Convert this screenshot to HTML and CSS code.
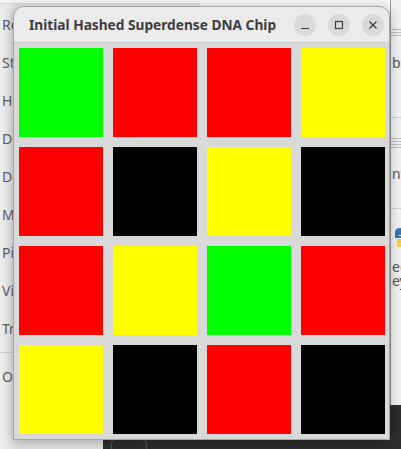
FILE: index.html
```html
<html>
    <head>
        <title>Initial Hashed Superdense DNA Chip</title>
        <link rel="stylesheet" href="styles.css">
    </head>
    <body>
        <div class="desk">
            <div class="backapp">
                <div class="topbar"></div>
                <ul class="menu">
                    <li>Recent</li>
                    <li>Starred</li>
                    <li>Home</li>
                    <li>Desktop</li>
                    <li>Documents</li>
                    <li>Music</li>
                    <li>Pictures</li>
                    <li>Videos</li>
                    <li>Trash</li>
                    <li class="sep">Other Locations</li>
                </ul>
            </div>
            <div class="sidepane">
                <div class="lines top"></div>
                <div class="row first">blob</div>
                <div class="lines"></div>
                <div class="row second">nvim</div>
                <div class="pyicon">
                    <svg width="14" height="22" viewBox="0 0 14 22">
                        <path d="M2 11 V5 C2 3 4 1 7 1 C10 1 11 3 11 5 V8 H6 V9 H11 V11 Z" fill="#3a75b0"/>
                        <path d="M4 12 H14 V20 H4 Z" fill="#f5d33d"/>
                    </svg>
                </div>
                <div class="row tight">eco</div>
                <div class="row tight">eye</div>
            </div>
            <div class="term">
                <div class="termbtn"></div>
            </div>

            <div class="window">
                <div class="titlebar">
                    <span class="title">Initial Hashed Superdense DNA Chip</span>
                    <div class="controls">
                        <div class="ctl">
                            <svg width="10" height="10" viewBox="0 0 10 10"><path d="M1 8.5 H9" stroke="#3d3d3d" stroke-width="1.2"/></svg>
                        </div>
                        <div class="ctl">
                            <svg width="10" height="10" viewBox="0 0 10 10"><rect x="1.5" y="1.5" width="7" height="7" fill="none" stroke="#3d3d3d" stroke-width="1.2"/></svg>
                        </div>
                        <div class="ctl">
                            <svg width="10" height="10" viewBox="0 0 10 10"><path d="M1.5 1.5 L8.5 8.5 M8.5 1.5 L1.5 8.5" stroke="#3d3d3d" stroke-width="1.3"/></svg>
                        </div>
                    </div>
                </div>
                <div class="chip">
                    <div class="cell green"></div>
                    <div class="cell red"></div>
                    <div class="cell red"></div>
                    <div class="cell yellow"></div>

                    <div class="cell red"></div>
                    <div class="cell black"></div>
                    <div class="cell yellow"></div>
                    <div class="cell black"></div>

                    <div class="cell red"></div>
                    <div class="cell yellow"></div>
                    <div class="cell green"></div>
                    <div class="cell red"></div>

                    <div class="cell yellow"></div>
                    <div class="cell black"></div>
                    <div class="cell red"></div>
                    <div class="cell black"></div>
                </div>
            </div>
        </div>
    </body>
</html>
```

FILE: styles.css
```css
body{
	margin:0;
	font-family:'Noto Sans', sans-serif;
	background:#f6f6f6;
	}
.desk{
	position:relative;
	width:401px;
	height:449px;
	overflow:hidden;
	}
.backapp{
	position:absolute;
	left:0;
	top:0;
	width:200px;
	height:449px;
	background:linear-gradient(90deg, #ededed 0, #ededed 4px, #e2e2e2 14px);
	}
.topbar{
	height:3px;
	border-bottom:1px solid #d6d6d6;
	background:#f4f4f4;
	}
.menu{
	list-style:none;
	margin:0;
	padding:6px 0 0 0;
	font-size:14px;
	color:#5e5e5e;
	}
.menu li{
	height:38px;
	line-height:30px;
	padding-left:2px;
	white-space:nowrap;
	}
.menu li.sep{
	border-top:1px solid #cfcfcf;
	padding-top:9px;
	}
.sidepane{
	position:absolute;
	left:390px;
	top:0;
	width:11px;
	height:405px;
	background:#f1f1f1;
	border-left:1px solid #9a9a9a;
	font-size:14px;
	color:#555;
	overflow:hidden;
	}
.lines{
	height:13px;
	margin-top:18px;
	background:repeating-linear-gradient(#f1f1f1 0, #f1f1f1 2px, #bdbdbd 2px, #bdbdbd 3px);
	}
.lines.top{
	margin-top:27px;
	height:11px;
	}
.row{
	padding-left:1px;
	line-height:20px;
	white-space:nowrap;
	}
.row.first{
	padding-top:15px;
	height:64px;
	border-bottom:1px solid #d4d4d4;
	}
.row.second{
	padding-top:15px;
	height:44px;
	border-bottom:1px solid #d4d4d4;
	}
.pyicon{
	height:22px;
	padding:18px 0 11px 2px;
	}
.row.tight{
	height:14px;
	line-height:14px;
	}
.term{
	position:absolute;
	left:103px;
	top:405px;
	right:0;
	bottom:0;
	background:#2c2c2c;
	}
.termbtn{
	margin:34px 0 0 8px;
	width:34px;
	height:20px;
	border:1px solid #555;
	border-radius:5px;
	}
.window{
	position:absolute;
	left:13px;
	top:6px;
	width:375px;
	height:432px;
	border:1px solid #a6a6a6;
	border-radius:11px 11px 0 0;
	background:#d9d9d9;
	box-shadow:0 2px 12px rgba(0,0,0,0.28);
	overflow:hidden;
	}
.titlebar{
	height:35px;
	background:#ebebeb;
	border-bottom:1px solid #cbcbcb;
	display:flex;
	align-items:center;
	padding-left:15px;
	padding-right:5px;
	}
.title{
	flex:1;
	font-weight:bold;
	font-size:13.7px;
	color:#3d3d3d;
	white-space:nowrap;
	}
.controls{
	display:flex;
	gap:12px;
	}
.ctl{
	width:22px;
	height:22px;
	border-radius:50%;
	background:#dadada;
	display:flex;
	align-items:center;
	justify-content:center;
	}
.chip{
	display:grid;
	grid-template-columns:repeat(4, 84px);
	grid-template-rows:repeat(4, 89px);
	gap:10px;
	padding:5px 4px 5px 5px;
	}
.green{ background:#00ff00; }
.red{ background:#ff0000; }
.yellow{ background:#ffff00; }
.black{ background:#000000; }
```
